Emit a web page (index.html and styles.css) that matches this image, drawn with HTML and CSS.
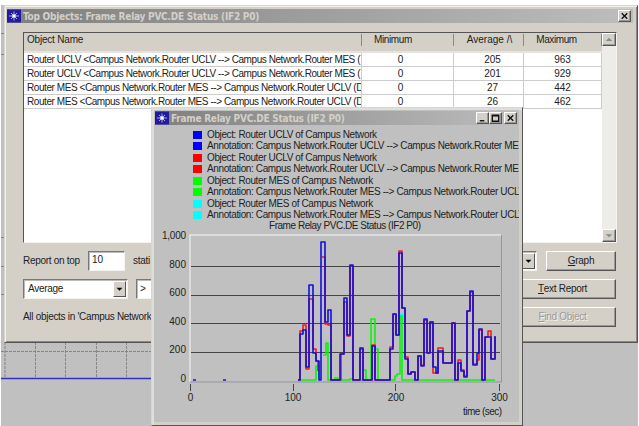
FILE: index.html
```html
<!DOCTYPE html>
<html lang="en">
<head>
<meta charset="utf-8">
<title>Top Objects</title>
<link rel="stylesheet" href="styles.css">
</head>
<body>
<div class="desktop">
<svg class="canvas" viewBox="0 0 639 426" width="639" height="426">
<path class="sheet" d="M0 0H639V5H0z"/>
<path class="grid" d="M5 342V379M35.500 342V379M65.500 342V379M96.500 342V379M126.500 342V379M1 351.500H152M1 237.500H4M1 266.500H4M1 294.500H4M1 33.500H4M1 54.500H4"/>
<path class="edge" d="M1 378.500H152"/>
<path class="sheet" d="M0 0H1V426H0zM638 0H639V426H638z"/>
</svg>
<section class="window top-objects">
<header class="titlebar">
<svg class="app" viewBox="0 0 14 13"><path class="app-bg" d="M0 0H14V13H0z"/><path class="star" d="M2 6.500H12M7 2V11M4 3.500L10 9.500M10 3.500L4 9.500"/><circle cx="7" cy="6.500" r="1.800"/></svg>
<h1>Top Objects: Frame Relay PVC.DE Status (IF2 P0)</h1>
<button class="cap"><svg viewBox="0 0 12 10"><path d="M3 2L9 8M9 2L3 8"/></svg></button>
</header>
<div class="list">
<div class="table">
<div class="row head"><span>Object Name</span><span>Minimum</span><span>Average /\</span><span>Maximum</span></div>
<div class="row"><span>Router UCLV &lt;Campus Network.Router UCLV --&gt; Campus Network.Router MES (</span><span>0</span><span>205</span><span>963</span></div>
<div class="row"><span>Router UCLV &lt;Campus Network.Router UCLV --&gt; Campus Network.Router MES (</span><span>0</span><span>201</span><span>929</span></div>
<div class="row"><span>Router MES &lt;Campus Network.Router MES --&gt; Campus Network.Router UCLV (D</span><span>0</span><span>27</span><span>442</span></div>
<div class="row"><span>Router MES &lt;Campus Network.Router MES --&gt; Campus Network.Router UCLV (D</span><span>0</span><span>26</span><span>462</span></div>
</div>
<div class="scroll"><button><svg viewBox="0 0 13 12"><path d="M3 7.500H10L6.500 4z"/></svg></button><button><svg viewBox="0 0 13 12"><path d="M3 4.500H10L6.500 8z"/></svg></button></div>
</div>
<div class="controls">
<div class="line first"><span class="report">Report on top</span><span class="field ten">10</span><span class="grow">stati</span><span class="combo small"><span></span><i><svg viewBox="0 0 13 16"><path d="M3 6.500H10L6.500 10z"/></svg></i></span><button class="push graph"><u>G</u>raph</button></div>
<div class="line second"><span class="combo average"><span>Average</span><i><svg viewBox="0 0 13 16"><path d="M3 6.500H10L6.500 10z"/></svg></i></span><span class="field op">&gt;</span><button class="push wide"><u>T</u>ext Report</button></div>
<div class="line third"><span class="scope">All objects in 'Campus Network</span><button class="push wide off"><u>F</u>ind Object</button></div>
</div>
</section>
<section class="window graph-window">
<header class="titlebar">
<svg class="app" viewBox="0 0 14 13"><path class="app-bg" d="M0 0H14V13H0z"/><path class="star" d="M2 6.500H12M7 2V11M4 3.500L10 9.500M10 3.500L4 9.500"/><circle cx="7" cy="6.500" r="1.800"/></svg>
<h1>Frame Relay PVC.DE Status (IF2 P0)</h1>
<button class="cap"><svg viewBox="0 0 12 10"><path d="M3 8H8"/></svg></button><button class="cap"><svg viewBox="0 0 12 10"><path d="M2.500 2H9.500V8.500H2.500zM2.500 2.500H9.500"/></svg></button><button class="cap last"><svg viewBox="0 0 12 10"><path d="M3 2L9 8M9 2L3 8"/></svg></button>
</header>
<ul class="legend">
<li class="blue">Object: Router UCLV of Campus Network</li>
<li class="blue">Annotation: Campus Network.Router UCLV --&gt; Campus Network.Router MES</li>
<li class="red">Object: Router UCLV of Campus Network</li>
<li class="red">Annotation: Campus Network.Router UCLV --&gt; Campus Network.Router MES</li>
<li class="green">Object: Router MES of Campus Network</li>
<li class="green">Annotation: Campus Network.Router MES --&gt; Campus Network.Router UCLV</li>
<li class="cyan">Object: Router MES of Campus Network</li>
<li class="cyan">Annotation: Campus Network.Router MES --&gt; Campus Network.Router UCLV</li>
</ul>
<svg class="chart" viewBox="155 221 364 202" width="364" height="202">
<text x="269" y="229" textLength="152">Frame Relay PVC.DE Status (IF2 P0)</text>
<path class="frame-light" d="M190 382V235H501"/><path class="frame-dark" d="M190 382H501.500V235"/>
<path class="rule" d="M191 266.500H500M191 295.500H500M191 323.500H500M191 352.500H500"/>
<path class="tick" d="M190.500 384V391M293.500 384V391M395.500 384V391M499.500 384V391"/>
<g class="end"><text x="186" y="239" textLength="24">1,000</text><text x="186" y="267.500">800</text><text x="186" y="296">600</text><text x="186" y="324.500">400</text><text x="186" y="353">200</text><text x="186" y="382">0</text></g>
<g class="mid"><text x="190.500" y="401">0</text><text x="293" y="401">100</text><text x="396" y="401">200</text><text x="499.500" y="401">300</text></g>
<text x="463" y="415" textLength="39">time (sec)</text>
<path class="plot cyan-line" d="M400 322V314H403V322"/>
<path class="plot green-line" d="M299 380H316V366H319V379M323 355H326V343H328V380H335V378H338V380H350V379H353V380H363V370H366V380H371V319H375V349H378V380H395V376H397V374H400V316H402V380H495"/>
<path class="plot red-line" d="M298 380H300V340V331H303V325H306V369H309V299H313V349H316V361H318V371M322 257H325V324H328V325H331V380H341V354H344V302H347V336H350V266H353V380H360V349H363V380H372V345H375V380H390V347H393V314H396V335H399V251H402V308H405V357H408V374H411V372H415V380H418V356H421V365H424V320H427V353H430V322H433V373H438V348H443V363H452V323H455V380H458V360H461V370H464V376H467V311H470V292H473V364H477V360H479V330H482V380H485V337H488V331H491V359H495V337"/>
<path class="plot blue-line" d="M193 380H196M223 380H226M298 380H300V334H303V330H306V367H309V285H313V353H316V361H319V380H321V242H325V322H328V310H331V380H340V354H344V298H347V335H350V265H353V380H360V348H363V380H372V346H375V380H390V349H393V314H396V335H399V253H402V308H405V359H408V374H411V372H415V380H418V356H421V366H424V319H427V353H430V322H433V367H436V373H438V351H443V363H452V323H455V380H458V363H461V371H464V377H467V311H470V291H473V365H477V353H479V329H482V380H485V337H491V359H495V336"/>
</svg>
</section>
</div>
</body>
</html>
```
FILE: styles.css
```css
* { box-sizing: border-box; }
body { margin: 0; font: 10px/12px "Liberation Sans", Arial, sans-serif; letter-spacing: -.3px; color: #222; }
.desktop { position: relative; width: 639px; height: 426px; overflow: hidden; background: #c0c0c0; }
.canvas { display: block; }
.sheet { fill: #fff; }
.grid { stroke: #858585; stroke-dasharray: 3 1; }
.edge { stroke: #332ec5; stroke-width: 1.500px; }
.window { position: absolute; display: flex; flex-direction: column; border: 1px solid; border-color: #d8d6d0 #555 #555 #d8d6d0; box-shadow: inset 1px 1px #f2f0eb, inset -1px -1px #888; }
.top-objects { left: 4px; top: 5px; width: 634px; height: 338px; background: #d4d0c8; padding: 3px 4px 0 2px; }
.titlebar { display: flex; align-items: center; height: 14px; background: linear-gradient(90deg, #808080, #bdbdbd); padding-right: 2px; }
.app { width: 14px; height: 14px; }
.app-bg { fill: #221b9c; }
.star { stroke: #aaa8f2; stroke-width: 1; }
.app circle { fill: #fff; }
h1 { flex: 1; margin: 0 0 0 2px; font: bold 10px/13px "DejaVu Sans Condensed", "DejaVu Sans", sans-serif; letter-spacing: -.24px; color: #d4d0c8; white-space: nowrap; }
button { display: flex; align-items: center; justify-content: center; padding: 0; font: inherit; letter-spacing: inherit; color: inherit; background: #d4d0c8; border: 1px solid; border-color: #fff #555 #555 #fff; box-shadow: inset -1px -1px #999; }
.cap { width: 13px; height: 12px; }
.cap svg { width: 12px; height: 10px; fill: none; stroke: #111; stroke-width: 1.500; }
.cap.last { margin-left: 2px; }
.list { display: flex; height: 211px; margin: 9px 16px 0 16px; border: 1px solid; border-color: #555 #f5f3ee #f5f3ee #555; background: #fff; }
.table { flex: 1; }
.row { display: grid; grid-template-columns: 338px 92px 70px 78px; height: 14px; border-bottom: 1px solid #ccc; line-height: 13px; }
.row span { overflow: hidden; white-space: nowrap; text-align: center; border-right: 1px solid #ccc; letter-spacing: 0; }
.row span:nth-child(2) { padding-right: 14px; }
.row span:nth-child(3) { padding-left: 8px; }
.row span:first-child { padding-left: 3px; text-align: left; letter-spacing: -.43px; }
.row.head { height: 20px; padding-top: 1px; background: #d4d0c8; border-bottom: 2px solid #e5e3dc; }
.row.head span { height: 12px; line-height: 12px; border-color: #888; }
.row.head span:first-child { letter-spacing: -.2px; }
.row.head span:nth-child(2) { padding-right: 29px; letter-spacing: -.4px; }
.row.head span:nth-child(3) { padding-left: 2px; }
.row.head span:nth-child(4) { padding-right: 12px; letter-spacing: -.4px; }
.scroll { width: 14px; display: flex; flex-direction: column; justify-content: space-between; background: #eeece8; }
.scroll button { height: 13px; width: 14px; }
.scroll svg { width: 12px; height: 11px; fill: #888; }
.controls { margin: 8px 17px 0 16px; }
.line { display: flex; align-items: center; height: 20px; margin-bottom: 8px; white-space: nowrap; }
.report { width: 65px; }
.field, .combo { height: 20px; background: #fff; border: 1px solid; border-color: #777 #f5f3ee #f5f3ee #777; box-shadow: inset 1px 1px #bbb; padding: 2px 3px; }
.ten { width: 37px; letter-spacing: 0; }
.grow { flex: 1; padding-left: 8px; }
.combo { display: flex; align-items: center; justify-content: space-between; padding: 1px 1px 1px 4px; }
.combo i { width: 13px; height: 16px; background: #d4d0c8; border: 1px solid; border-color: #fff #555 #555 #fff; }
.combo svg { display: block; width: 11px; height: 14px; }
.small { width: 60px; margin-right: 9px; }
.average { width: 105px; }
.op { width: 40px; margin-left: 8px; line-height: 14px; }
.push { height: 20px; }
.graph { width: 70px; }
.wide { width: 107px; margin-left: auto; }
.off { color: #999; text-shadow: 1px 1px #f5f3ee; }
.graph-window { left: 151px; top: 107px; width: 372px; height: 319px; background: #c0c0c0; padding: 3px 3px 0 3px; border-left-color: #d8d6d0; box-shadow: inset 2px 2px #e0ded8, inset -3px -3px #d4d0c8; }
.legend { list-style: none; margin: 4px 0 0; padding: 0 0 0 38px; height: 92px; }
.legend li { display: flex; height: 11.450px; line-height: 11.450px; white-space: nowrap; letter-spacing: -.38px; overflow: hidden; }
.legend li::before { content: ""; flex: none; width: 9px; height: 8px; margin: 2px 5px 0 0; background: var(--c); }
.blue { --c: #00f; }
.red { --c: #f00; }
.green { --c: #0f0; }
.cyan { --c: #0ff; }
.chart { display: block; letter-spacing: 0; }
.chart text { fill: #222; }
.end { text-anchor: end; }
.mid { text-anchor: middle; }
.frame-light { fill: none; stroke: #e5e5e5; stroke-width: 1.500px; }
.frame-dark { fill: none; stroke: #9295a0; }
.rule, .tick { stroke: #444; }
.plot { fill: none; stroke-width: 1.600px; stroke-linejoin: round; }
.blue-line { stroke: #1010dd; }
.red-line { stroke: #f51818; }
.green-line { stroke: #0df20d; }
.cyan-line { stroke: #0ff; }
```
